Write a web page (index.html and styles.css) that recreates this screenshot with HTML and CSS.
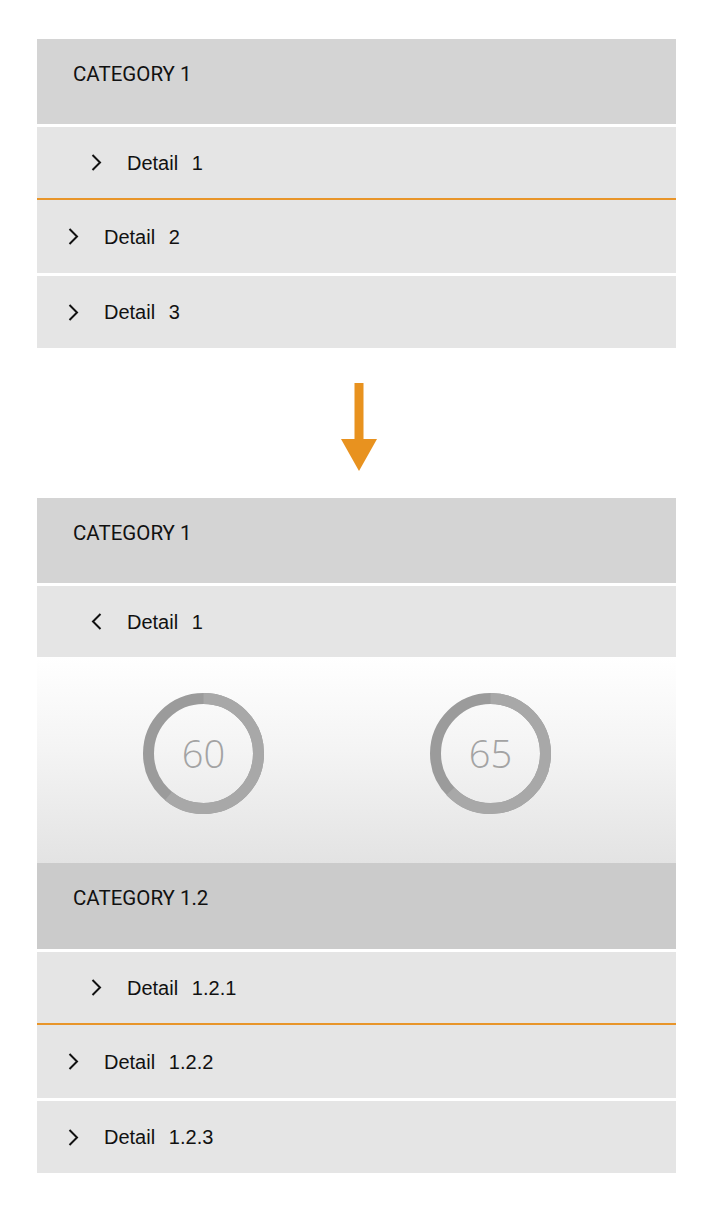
FILE: index.html
```html
<!DOCTYPE html>
<html>
<head>
<meta charset="utf-8">
<link rel="stylesheet" href="styles.css">
</head>
<body>
<div class="page">
  <section class="group">
    <div class="cat">CATEGORY 1</div>
    <div class="row sub first orange">
      <svg class="chev" viewBox="0 0 11 17" width="11" height="17"><polyline points="1.5,1 9,8.5 1.5,16" /></svg>
      <span class="label">Detail  1</span>
    </div>
    <div class="row tall">
      <svg class="chev" viewBox="0 0 11 17" width="11" height="17"><polyline points="1.5,1 9,8.5 1.5,16" /></svg>
      <span class="label">Detail  2</span>
    </div>
    <div class="row gap">
      <svg class="chev" viewBox="0 0 11 17" width="11" height="17"><polyline points="1.5,1 9,8.5 1.5,16" /></svg>
      <span class="label">Detail  3</span>
    </div>
  </section>

  <div class="arrow-wrap">
    <svg class="arrow" viewBox="0 0 36 88" width="36" height="88">
      <rect x="13.5" y="0" width="9" height="58" />
      <polygon points="0,56 36,56 18,88" />
    </svg>
  </div>

  <section class="group">
    <div class="cat">CATEGORY 1</div>
    <div class="row sub first">
      <svg class="chev" viewBox="0 0 11 17" width="11" height="17"><polyline points="9.5,1 2,8.5 9.5,16" /></svg>
      <span class="label">Detail  1</span>
    </div>
    <div class="panel">
      <div class="gauge">
        <svg viewBox="0 0 121 121" width="121" height="121">
          <circle class="ring-base" cx="60.5" cy="60.5" r="55" />
          <circle class="ring-val" cx="60.5" cy="60.5" r="55" pathLength="100" stroke-dasharray="61 100" transform="rotate(-90 60.5 60.5)" />
        </svg>
        <span class="num">60</span>
      </div>
      <div class="gauge">
        <svg viewBox="0 0 121 121" width="121" height="121">
          <circle class="ring-base" cx="60.5" cy="60.5" r="55" />
          <circle class="ring-val" cx="60.5" cy="60.5" r="55" pathLength="100" stroke-dasharray="63 100" transform="rotate(-90 60.5 60.5)" />
        </svg>
        <span class="num">65</span>
      </div>
    </div>
    <div class="cat dark">CATEGORY 1.2</div>
    <div class="row sub first orange">
      <svg class="chev" viewBox="0 0 11 17" width="11" height="17"><polyline points="1.5,1 9,8.5 1.5,16" /></svg>
      <span class="label">Detail  1.2.1</span>
    </div>
    <div class="row tall">
      <svg class="chev" viewBox="0 0 11 17" width="11" height="17"><polyline points="1.5,1 9,8.5 1.5,16" /></svg>
      <span class="label">Detail  1.2.2</span>
    </div>
    <div class="row gap">
      <svg class="chev" viewBox="0 0 11 17" width="11" height="17"><polyline points="1.5,1 9,8.5 1.5,16" /></svg>
      <span class="label">Detail  1.2.3</span>
    </div>
  </section>
</div>
</body>
</html>
```

FILE: styles.css
```css
html, body {
  margin: 0;
  padding: 0;
  background: #ffffff;
}

body {
  font-family: "Liberation Sans", Arial, sans-serif;
  color: #111111;
}

.page {
  padding: 39px 37px 0;
}

.group {
  display: flex;
  flex-direction: column;
}

.cat {
  height: 85px;
  box-sizing: border-box;
  background: #d4d4d4;
  padding: 23px 0 0 36px;
  font-family: Roboto, "Liberation Sans", sans-serif;
  font-size: 20.5px;
  line-height: 24px;
}

.cat.dark {
  background: #cbcbcb;
  height: 86px;
}

.row {
  display: flex;
  align-items: center;
  gap: 25px;
  box-sizing: border-box;
  height: 72px;
  background: #e5e5e5;
  padding-left: 31px;
}

.row.sub {
  padding-left: 54px;
}

.row.first {
  margin-top: 3px;
  height: 71px;
}

.row.orange {
  height: 73px;
  border-bottom: 2px solid #e8952a;
}

.row.tall {
  height: 73px;
}

.row.gap {
  margin-top: 3px;
}

.chev {
  flex: none;
}

.chev polyline {
  fill: none;
  stroke: #111111;
  stroke-width: 2;
  stroke-linecap: butt;
  stroke-linejoin: miter;
}

.label {
  white-space: pre;
  font-size: 20px;
  line-height: 20px;
  word-spacing: 1.3px;
}

.arrow-wrap {
  height: 150px;
  box-sizing: border-box;
  padding-top: 35px;
  display: flex;
  justify-content: center;
  padding-left: 4px;
}

.arrow {
  fill: #e8921f;
}

.panel {
  height: 206px;
  box-sizing: border-box;
  background: linear-gradient(to bottom, #ffffff 0%, #f4f4f4 45%, #e3e3e3 100%);
  display: flex;
  padding: 36px 0 0 106px;
  gap: 166px;
}

.gauge {
  position: relative;
  width: 121px;
  height: 121px;
}

.gauge svg {
  display: block;
}

.ring-base,
.ring-val {
  fill: none;
  stroke-width: 11;
}

.ring-base {
  stroke: #9b9b9b;
}

.ring-val {
  stroke: #a8a8a8;
}

.num {
  position: absolute;
  inset: 0;
  display: flex;
  align-items: center;
  justify-content: center;
  font-family: "Open Sans", "Liberation Sans", sans-serif;
  font-weight: 300;
  font-size: 38px;
  color: #a3a3a3;
  padding-bottom: 2px;
  box-sizing: border-box;
}
```
